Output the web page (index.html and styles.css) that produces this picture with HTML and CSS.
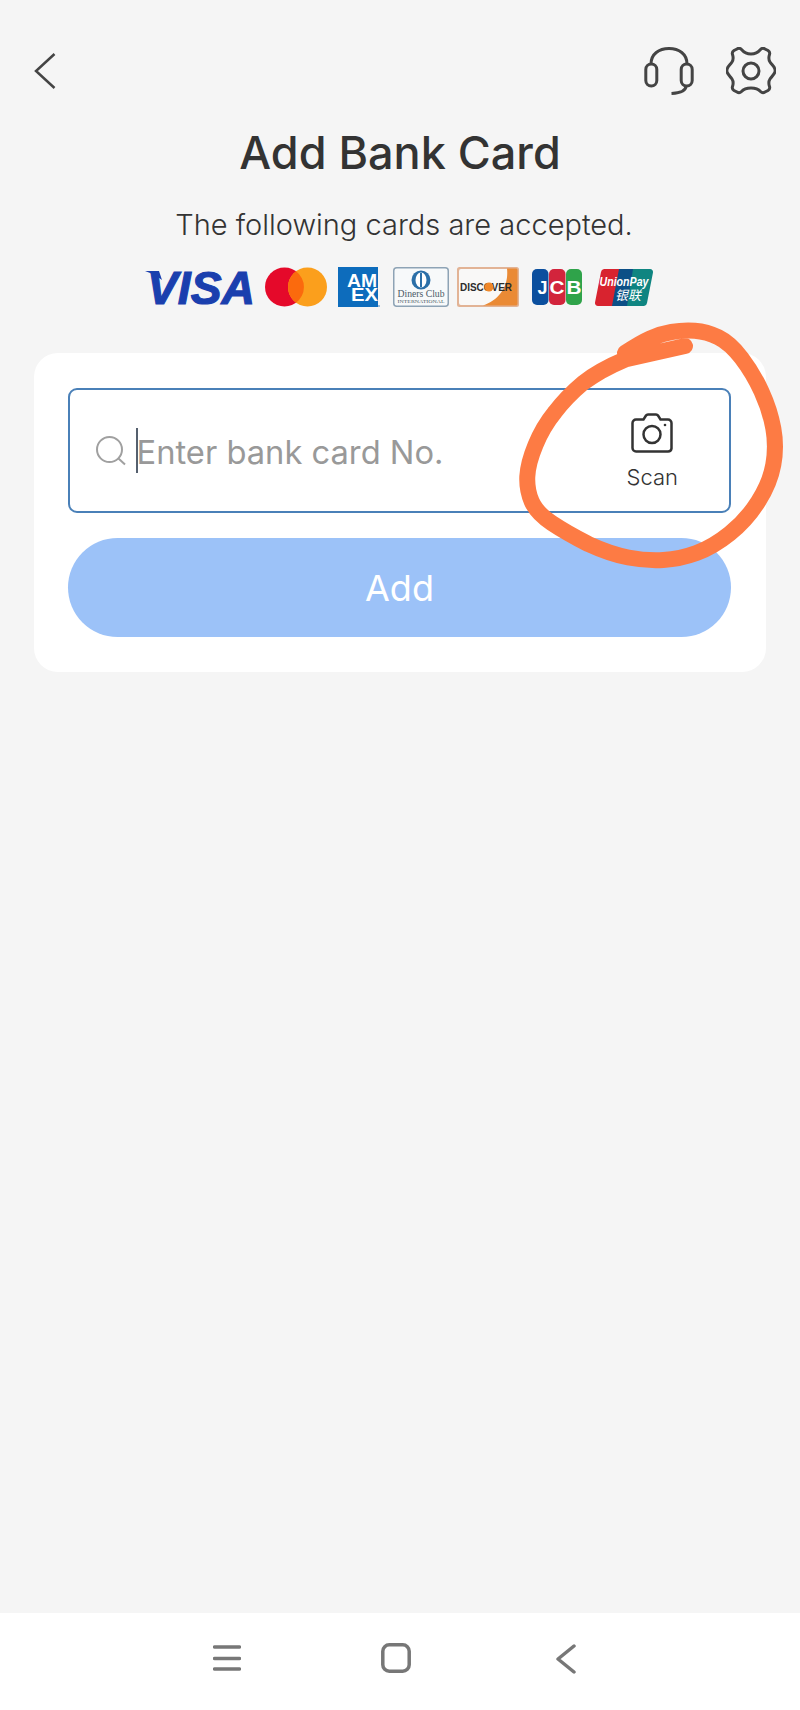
FILE: index.html
```html
<!DOCTYPE html>
<html lang="en">
<head>
    <meta charset="UTF-8">
    <meta name="viewport" content="width=device-width, initial-scale=1.0">
    <title>Add Bank Card</title>
    <link rel="stylesheet" href="styles.css">
</head>
<body>
    <div class="page">
        <main class="content">
            <header class="topbar">
                <svg class="icon-back" viewBox="0 0 22 36"><path d="M20.5 1 2 18l18.500 17"/></svg>
                <div class="topbar-actions">
                    <svg class="icon-top" viewBox="0 0 50 48">
                        <path d="M7 17C7 7 15 1.500 25 1.500S43 7 43 17"/>
                        <rect x="1.800" y="17" width="11" height="22" rx="5.500"/>
                        <rect x="37.200" y="17" width="11" height="22" rx="5.500"/>
                        <path d="M42 39c0 4.500-5 7-14.500 7.500"/>
                    </svg>
                    <svg class="icon-top" viewBox="0 0 50 48">
                        <path d="M25 7c4 0 7-1.500 9.500-4.500 1.500-1.500 3-1.500 4.500-.5l3 1.500c1.500 1 2 2.500 1.500 4-1 3-.8 5.500.5 7.500s3.500 4 4.500 6c.8 1.500.8 3.500 0 5-1 2-3.200 4-4.500 6s-1.500 4.500-.5 7.500c.5 1.500 0 3-1.500 4l-3 1.500c-1.500 1-3 1-4.500-.5C32 41.500 29 41 25 41s-7 .5-9.500 3.500c-1.500 1.500-3 1.500-4.500.5l-3-1.500c-1.500-1-2-2.500-1.500-4 1-3 .8-5.500-.5-7.500s-3.500-4-4.500-6c-.8-1.500-.8-3.500 0-5 1-2 3.200-4 4.500-6s1.500-4.500.5-7.500c-.5-1.500 0-3 1.500-4l3-1.500c1.500-1 3-1 4.500.5C18 5.500 21 7 25 7z"/>
                        <circle cx="25" cy="24" r="8"/>
                    </svg>
                </div>
            </header>

            <h1 class="title">Add Bank Card</h1>
            <p class="subtitle">The following cards are accepted.</p>

            <div class="logos">
                <svg class="logo logo-visa" viewBox="0 0 108 34">
                    <path d="M0 1h14l3 9C12 6 6 3 0 1z" fill="#1a3fae"/>
                    <text x="2" y="33.500" class="visa-text" textLength="108" lengthAdjust="spacingAndGlyphs">VISA</text>
                </svg>
                <svg class="logo logo-mc" viewBox="0 0 62 40">
                    <circle cx="19.500" cy="20" r="19.500" fill="#e5092a"/>
                    <circle cx="42.500" cy="20" r="19.500" fill="#fb9f1c"/>
                    <path d="M31 4.300a19.500 19.500 0 0 1 0 31.400 19.500 19.500 0 0 1 0-31.400z" fill="#fb6a0d"/>
                </svg>
                <svg class="logo logo-amex" viewBox="0 0 42 40">
                    <rect width="40" height="40" fill="#0d6cbc"/>
                    <text x="39" y="20" text-anchor="end" class="amex-text" textLength="30" lengthAdjust="spacingAndGlyphs">AM</text>
                    <text x="40" y="34" text-anchor="end" class="amex-text" textLength="27" lengthAdjust="spacingAndGlyphs">EX</text>
                    <circle cx="41" cy="39" r="1" fill="#7ba7cf"/>
                </svg>
                <svg class="logo logo-diners" viewBox="0 0 56 40">
                    <rect x=".75" y=".75" width="54.500" height="38.500" rx="3" fill="#f7f9fa" stroke="#8ea3b5" stroke-width="1.500"/>
                    <circle cx="28" cy="13" r="9.500" fill="#2b6fa8"/>
                    <ellipse cx="28" cy="13" rx="5.500" ry="7.500" fill="#fff"/>
                    <rect x="27" y="6" width="2" height="14" fill="#2b6fa8"/>
                    <text x="28" y="30" text-anchor="middle" class="diners-name" textLength="47" lengthAdjust="spacingAndGlyphs">Diners Club</text>
                    <text x="28" y="36" text-anchor="middle" class="diners-sub" textLength="47" lengthAdjust="spacingAndGlyphs">INTERNATIONAL</text>
                </svg>
                <svg class="logo logo-discover" viewBox="0 0 62 40">
                    <rect width="62" height="40" rx="2.500" fill="#e2b395"/>
                    <path d="M2 2h56a2 2 0 0 1 2 2v32a2 2 0 0 1-2 2H4a2 2 0 0 1-2-2V4a2 2 0 0 1 2-2z" fill="#f9f8f7"/>
                    <path d="M50 1.500h9a1.500 1.500 0 0 1 1.500 1.500v34a1.500 1.500 0 0 1-1.500 1.500H26C42 33 52 20 50 1.500z" fill="#ea8a35"/>
                    <text x="3" y="24" class="discover-text" textLength="52" lengthAdjust="spacingAndGlyphs">DISCOVER</text>
                    <circle cx="32" cy="20" r="4.500" fill="#f0882a"/>
                </svg>
                <svg class="logo logo-jcb" viewBox="0 0 50 38">
                    <rect x="0" y="1" width="16.500" height="36" rx="5" fill="#0b4f9e"/>
                    <rect x="17" y="1" width="16.500" height="36" rx="5" fill="#d2243c"/>
                    <rect x="34" y="1" width="16" height="36" rx="5" fill="#2fa34a"/>
                    <text x="10.500" y="26" text-anchor="middle" class="jcb-text" textLength="10" lengthAdjust="spacingAndGlyphs">J</text>
                    <text x="25" y="26" text-anchor="middle" class="jcb-text" textLength="15" lengthAdjust="spacingAndGlyphs">C</text>
                    <text x="42" y="26" text-anchor="middle" class="jcb-text" textLength="15" lengthAdjust="spacingAndGlyphs">B</text>
                </svg>
                <svg class="logo logo-unionpay" viewBox="0 0 58 37">
                    <path d="M9 0h18l-7 37H3a3 3 0 0 1-3-3.500L6 3a3.500 3.500 0 0 1 3-3z" fill="#d8232f"/>
                    <path d="M24 0h18l-6 37H17z" fill="#0c4f86"/>
                    <path d="M38 0h17a3 3 0 0 1 3 3.500L52 34a3.500 3.500 0 0 1-3 3H32z" fill="#0f8581"/>
                    <text x="29" y="17" text-anchor="middle" class="union-text" textLength="49" lengthAdjust="spacingAndGlyphs">UnionPay</text>
                    <text x="33" y="31" text-anchor="middle" class="union-cn">银联</text>
                </svg>
            </div>

            <section class="card">
                <div class="field">
                    <svg class="icon-search" viewBox="0 0 30 30"><circle cx="13.500" cy="13.500" r="12.500"/><path d="m22.500 22.500 6.500 6"/></svg>
                    <span class="caret"></span>
                    <span class="placeholder">Enter bank card No.</span>
                    <div class="scan">
                        <svg class="icon-camera" viewBox="0 0 42 40">
                            <path d="M5 6.500h7.500L15 2.500c.5-.8 1-1 2-1h8c1 0 1.500.2 2 1l2.500 4H37a3.500 3.500 0 0 1 3.500 3.500v25.500A3.500 3.500 0 0 1 37 38.500H5a3.500 3.500 0 0 1-3.500-3.500V10A3.500 3.500 0 0 1 5 6.500z"/>
                            <circle cx="21" cy="21.500" r="8.500"/>
                            <circle class="camera-dot" cx="34" cy="12" r="1.300"/>
                        </svg>
                        <span class="scan-label">Scan</span>
                    </div>
                </div>
                <button class="add-btn">Add</button>
            </section>
        </main>

        <nav class="navbar">
            <svg class="nav-menu" viewBox="0 0 28 26"><path d="M1.500 2h25M1.500 13.500h25M1.500 24h25"/></svg>
            <svg class="nav-home" viewBox="0 0 30 30"><rect x="1.800" y="1.800" width="26.400" height="26.400" rx="6.500"/></svg>
            <svg class="nav-back" viewBox="0 0 20 30"><path d="M18 2 2 15l16 13"/></svg>
        </nav>

        <!-- hand drawn marker round the scan button -->
        <svg class="scribble" viewBox="0 0 800 1710">
            <path d="M685 346L625 359.500Q600 370 583 383Q566.700 396.700 555 412Q543 426.700 535.500 445Q528 463 527.300 476.500Q526.700 490 531.700 501.500Q536.700 513 551.700 523Q566.700 533 588.300 544Q610 554 628.300 557.500Q646.700 561 663.300 560Q680 559 696.500 553Q713 547 729.800 533.500Q746.700 520 758.300 501.500Q770 483 773.300 464.800Q776.700 446.700 773.300 428.300Q770 410 761.500 391.500Q753 373 741.500 358Q730 343 718.300 337.300Q706.700 331.700 694.800 330.800Q683 330 671.500 332Q660 334 650 338.500Q640 343 625 353"/>
        </svg>
    </div>
</body>
</html>
```

FILE: styles.css
```css
body {
    margin: 0;
    background-color: #f5f5f5;
    font-family: Inter, "Noto Sans", sans-serif;
    color: #333;
}
.page {
    position: relative;
    width: 800px;
    height: 1710px;
    display: flex;
    flex-direction: column;
    overflow: hidden;
}
.content {
    flex: 1;
    padding: 47px 24px 0 34px;
}
.topbar {
    display: flex;
    justify-content: space-between;
    align-items: center;
    height: 48px;
}
.topbar-actions {
    display: flex;
    gap: 32px;
}
.icon-back {
    width: 22px;
    height: 36px;
    fill: none;
    stroke: #444;
    stroke-width: 2.500;
}
.icon-top {
    width: 50px;
    height: 48px;
    fill: none;
    stroke: #444;
    stroke-width: 3;
}
.title {
    margin: 28px 0 0 -10px;
    height: 60px;
    line-height: 60px;
    font-size: 45px;
    font-weight: 500;
    text-align: center;
    color: #333;
}
.subtitle {
    margin: 22px 0 0 -2px;
    line-height: 40px;
    font-size: 29px;
    font-weight: 300;
    text-align: center;
    color: #333;
}
.logos {
    display: flex;
    align-items: center;
    height: 40px;
    margin: 22px 0 0 111px;
}
.logo {
    display: block;
    overflow: visible;
}
.logo-visa { width: 108px; height: 34px; }
.logo-mc { width: 62px; height: 40px; margin-left: 12px; }
.logo-amex { width: 42px; height: 40px; margin-left: 11px; }
.logo-diners { width: 56px; height: 40px; margin-left: 13px; }
.logo-discover { width: 62px; height: 40px; margin-left: 8px; }
.logo-jcb { width: 50px; height: 38px; margin-left: 13px; }
.logo-unionpay { width: 58px; height: 37px; margin-left: 13px; }
.visa-text {
    font-family: "Liberation Sans", sans-serif;
    font-size: 46px;
    font-weight: 700;
    font-style: italic;
    fill: #1a3fae;
    stroke: #1a3fae;
    stroke-width: 1.200;
}
.amex-text {
    font-family: "Liberation Sans", sans-serif;
    font-size: 18px;
    font-weight: 700;
    fill: #fff;
}
.diners-name {
    font-family: "Liberation Serif", serif;
    font-size: 11px;
    fill: #4c5a66;
}
.diners-sub {
    font-family: "Liberation Serif", serif;
    font-size: 5px;
    fill: #4c5a66;
}
.discover-text {
    font-family: "Liberation Sans", sans-serif;
    font-size: 11.500px;
    font-weight: 700;
    fill: #2c2c2c;
}
.jcb-text {
    font-family: "Liberation Sans", sans-serif;
    font-size: 19px;
    font-weight: 700;
    fill: #fff;
}
.union-text {
    font-family: "Liberation Sans", sans-serif;
    font-size: 12px;
    font-weight: 700;
    font-style: italic;
    fill: #fff;
}
.union-cn {
    font-family: "Noto Sans CJK SC", sans-serif;
    font-size: 13px;
    font-style: italic;
    fill: #fff;
}
.card {
    width: 732px;
    height: 319px;
    box-sizing: border-box;
    margin-top: 46px;
    padding: 35px 35px 35px 34px;
    background: #fff;
    border-radius: 24px;
}
.field {
    display: flex;
    align-items: center;
    height: 125px;
    box-sizing: border-box;
    padding-left: 26px;
    border: 2px solid #4a80b8;
    border-radius: 9px;
}
.icon-search {
    width: 30px;
    height: 30px;
    fill: none;
    stroke: #a0a0a0;
    stroke-width: 2;
}
.caret {
    width: 1.500px;
    height: 45px;
    margin-left: 10px;
    background: #55606e;
}
.placeholder {
    margin-left: -1px;
    padding-top: 2px;
    font-size: 32.700px;
    font-weight: 400;
    color: #999;
}
.scan {
    margin-left: auto;
    margin-right: 51px;
    padding-top: 2px;
    display: flex;
    flex-direction: column;
    align-items: center;
    gap: 10px;
}
.icon-camera {
    width: 42px;
    height: 40px;
    fill: none;
    stroke: #333;
    stroke-width: 2.500;
}
.camera-dot {
    fill: #333;
    stroke: none;
}
.scan-label {
    font-size: 22px;
    font-weight: 300;
    line-height: 28px;
    color: #333;
}
.add-btn {
    display: block;
    width: 100%;
    height: 99px;
    margin-top: 25px;
    border: none;
    border-radius: 50px;
    background-color: #9cc2f8;
    color: #fff;
    font-family: inherit;
    font-size: 36px;
    font-weight: 400;
}
.navbar {
    height: 97px;
    background: #fff;
    position: relative;
}
.navbar svg {
    position: absolute;
    fill: none;
    stroke: #777;
    stroke-width: 3.500;
    stroke-linecap: round;
    stroke-linejoin: round;
}
.nav-menu { left: 213px; top: 32px; width: 28px; height: 26px; }
.nav-home { left: 381px; top: 30px; width: 30px; height: 30px; }
.nav-back { left: 556px; top: 31px; width: 20px; height: 30px; }
.scribble {
    position: absolute;
    left: 0;
    top: 0;
    width: 800px;
    height: 1710px;
    fill: none;
    stroke: #fd7b44;
    stroke-width: 16;
    stroke-linecap: round;
    stroke-linejoin: round;
}
```
